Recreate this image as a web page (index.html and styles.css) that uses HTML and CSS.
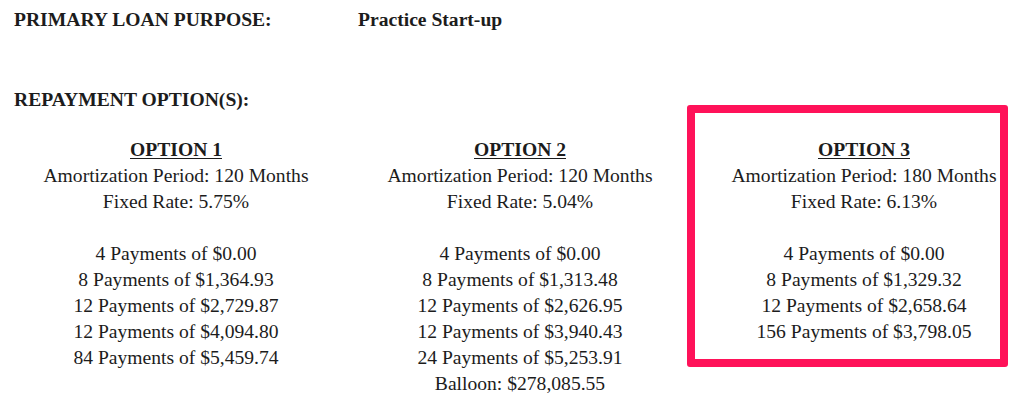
FILE: index.html
```html
<!DOCTYPE html>
<html>
<head>
<meta charset="utf-8">
<link rel="stylesheet" href="styles.css">
</head>
<body>
<div class="page">
  <div class="purpose">
    <span class="label">PRIMARY LOAN PURPOSE:</span>
    <span class="value">Practice Start-up</span>
  </div>
  <div class="section-title">REPAYMENT OPTION(S):</div>
  <div class="options">
    <div class="option">
      <div class="opt-title">OPTION 1</div>
      <div>Amortization Period: 120 Months</div>
      <div>Fixed Rate: 5.75%</div>
      <div class="gap"></div>
      <div>4 Payments of $0.00</div>
      <div>8 Payments of $1,364.93</div>
      <div>12 Payments of $2,729.87</div>
      <div>12 Payments of $4,094.80</div>
      <div>84 Payments of $5,459.74</div>
    </div>
    <div class="option">
      <div class="opt-title">OPTION 2</div>
      <div>Amortization Period: 120 Months</div>
      <div>Fixed Rate: 5.04%</div>
      <div class="gap"></div>
      <div>4 Payments of $0.00</div>
      <div>8 Payments of $1,313.48</div>
      <div>12 Payments of $2,626.95</div>
      <div>12 Payments of $3,940.43</div>
      <div>24 Payments of $5,253.91</div>
      <div>Balloon: $278,085.55</div>
    </div>
    <div class="option">
      <div class="opt-title">OPTION 3</div>
      <div>Amortization Period: 180 Months</div>
      <div>Fixed Rate: 6.13%</div>
      <div class="gap"></div>
      <div>4 Payments of $0.00</div>
      <div>8 Payments of $1,329.32</div>
      <div>12 Payments of $2,658.64</div>
      <div>156 Payments of $3,798.05</div>
    </div>
  </div>
  <div class="highlight"></div>
</div>
</body>
</html>
```

FILE: styles.css
```css
html, body {
  margin: 0;
  padding: 0;
  background: #ffffff;
}
body {
  font-family: "Liberation Serif", "Times New Roman", serif;
  color: #1c1c1c;
  font-size: 19.6px;
}
.page {
  position: relative;
  width: 1009px;
  height: 401px;
  overflow: hidden;
}
.purpose {
  display: flex;
  padding: 8px 0 0 14px;
  line-height: 24px;
  font-weight: bold;
}
.purpose .label {
  width: 344px;
}
.section-title {
  padding: 56px 0 0 14px;
  line-height: 24px;
  font-weight: bold;
}
.options {
  display: grid;
  grid-template-columns: repeat(3, 344px);
  padding: 25px 0 0 4px;
  text-align: center;
  line-height: 26px;
}
.opt-title {
  font-weight: bold;
  text-decoration: underline;
  text-underline-offset: 2px;
}
.gap {
  height: 26px;
}
.highlight {
  position: absolute;
  left: 687px;
  top: 105px;
  width: 321px;
  height: 262px;
  box-sizing: border-box;
  border: 8px solid #ff1259;
  border-radius: 3px;
}
```
